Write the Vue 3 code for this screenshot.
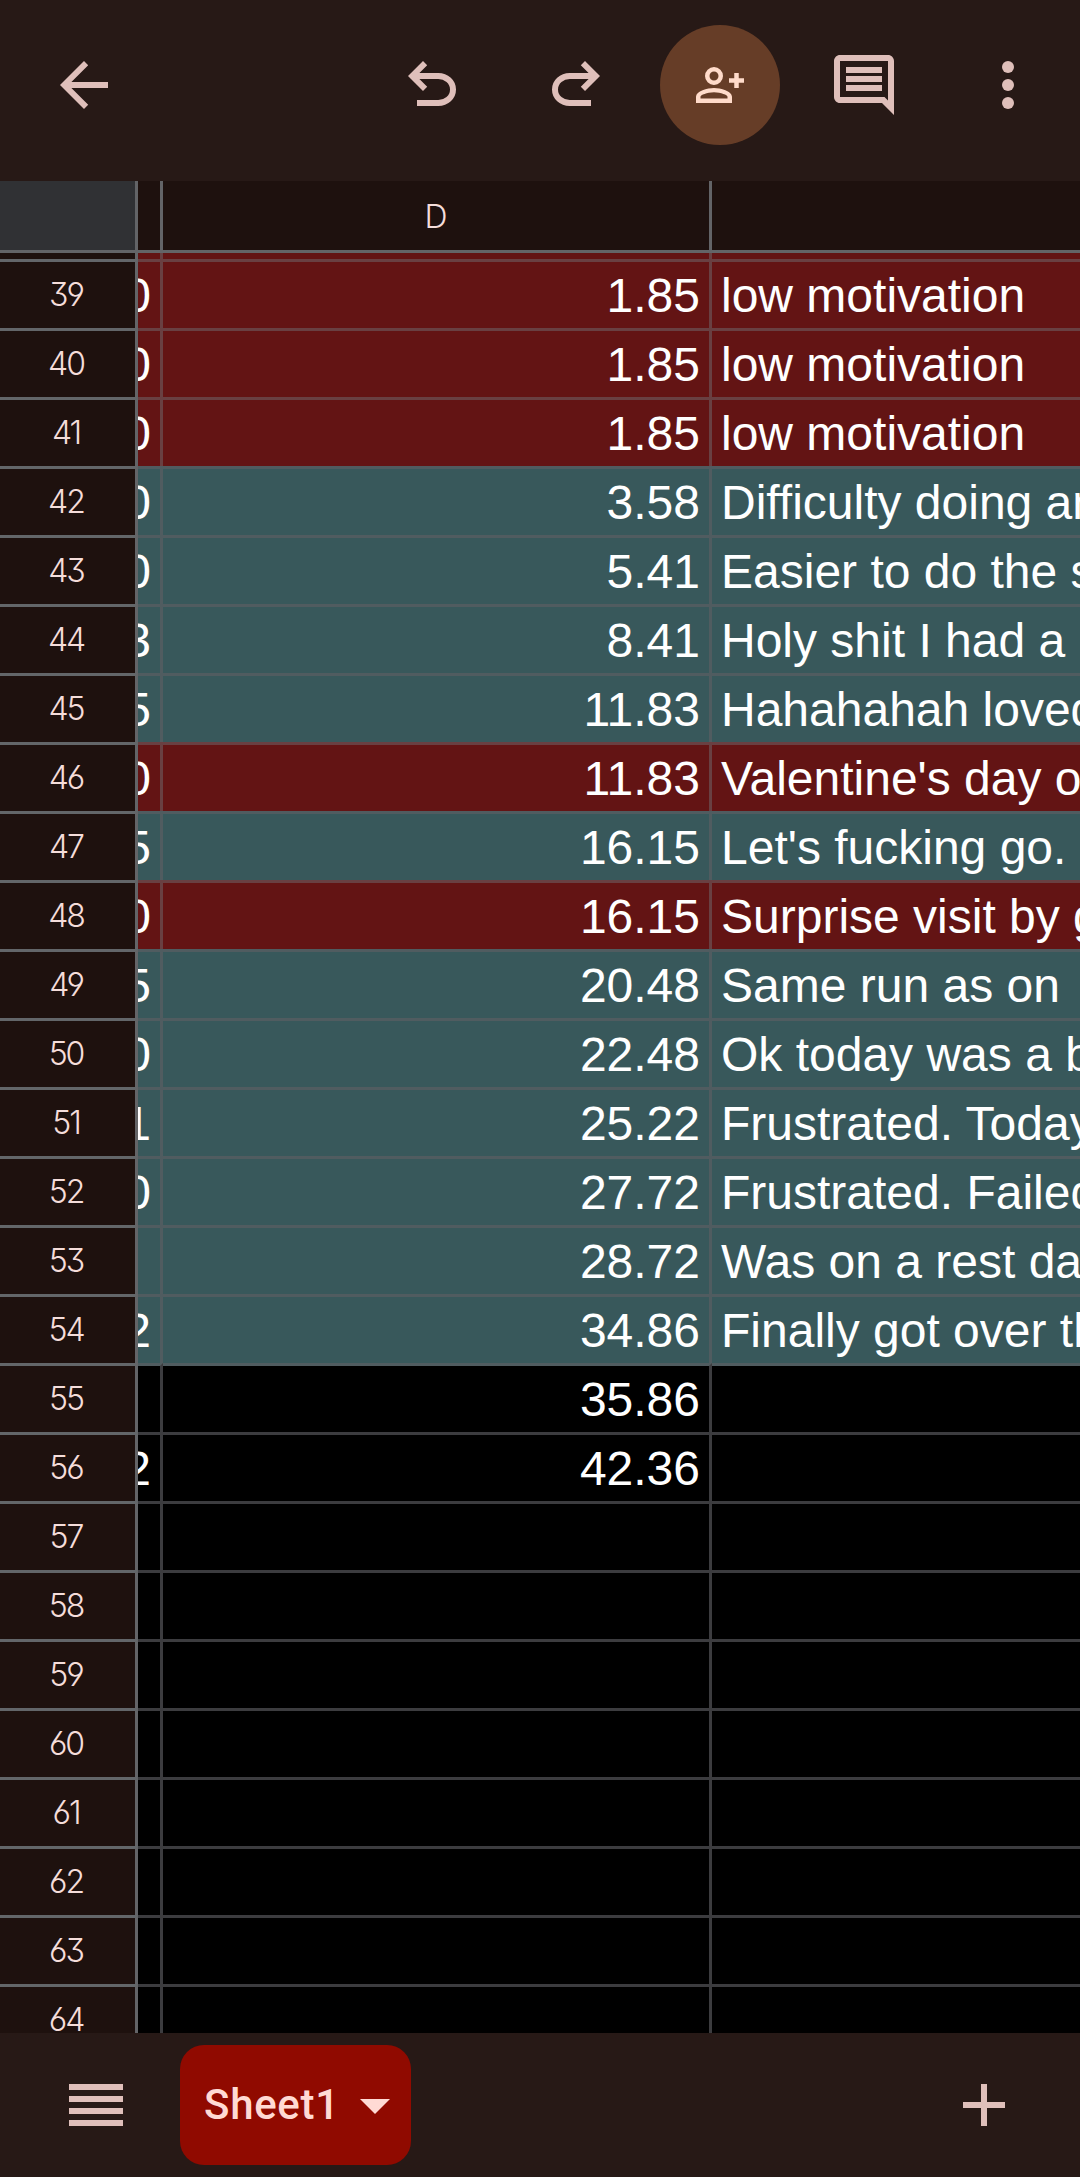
<template>
  <div class="app">
    <!-- toolbar -->
    <header class="toolbar">
      <button class="tool" aria-label="Back">
        <svg viewBox="0 0 24 24"><path d="M20 11H7.8l5.6-5.6L12 4l-8 8 8 8 1.4-1.4L7.8 13H20v-2z" /></svg>
      </button>
      <div class="actions">
        <button class="tool" aria-label="Undo">
          <svg viewBox="0 0 24 24"><path :d="undoPath" /></svg>
        </button>
        <button class="tool" aria-label="Redo">
          <svg class="flip" viewBox="0 0 24 24"><path :d="undoPath" /></svg>
        </button>
        <button class="tool share" aria-label="Share">
          <svg viewBox="0 0 54 54">
            <circle cx="21" cy="18" r="6.75" fill="none" stroke="currentColor" stroke-width="4.5" />
            <path fill-rule="evenodd" d="M3 45v-6.3C3 33 14.5 30 21 30s18 3 18 8.7V45zM7.5 40.5h27v-1.8c0-1.600-6.5-4.5-13.5-4.5s-13.5 2.900-13.5 4.500z" />
            <path d="M41.25 15h4.500v5.250H51v4.500h-5.250V30h-4.500v-5.250H36v-4.500h5.250z" />
          </svg>
        </button>
        <button class="tool" aria-label="Comments">
          <svg viewBox="0 0 24 24"><path d="M22 4c0-1.100-.9-2-2-2H4c-1.100 0-2 .9-2 2v12c0 1.100.9 2 2 2h14l4 4V4zM20 4v13.170L18.830 16H4V4h16zM6 12h12v2H6zM6 9h12v2H6zM6 6h12v2H6z" /></svg>
        </button>
        <button class="tool" aria-label="More">
          <svg viewBox="0 0 24 24">
            <circle cx="12" cy="6" r="2" /><circle cx="12" cy="12" r="2" /><circle cx="12" cy="18" r="2" />
          </svg>
        </button>
      </div>
    </header>

    <!-- grid -->
    <main class="sheet">
      <div class="row head">
        <div class="corner"></div>
        <div class="col"></div>
        <div class="col">D</div>
        <div class="col last"></div>
      </div>
      <div class="row red peek">
        <div class="num"></div>
        <div class="cell"></div>
        <div class="cell"></div>
        <div class="cell last"></div>
      </div>
      <div v-for="row in rows" :key="row.n" class="row" :class="row.tone">
        <div class="num">{{ row.n }}</div>
        <div class="cell right">{{ row.c }}</div>
        <div class="cell right">{{ row.d }}</div>
        <div class="cell last">{{ row.e }}</div>
      </div>
    </main>

    <!-- sheet tabs -->
    <footer class="tabs">
      <button class="all-sheets" aria-label="All sheets">
        <span></span><span></span><span></span><span></span>
      </button>
      <button class="tab">
        <span class="tab-name">Sheet1</span>
        <svg class="caret" viewBox="0 0 30 15"><path d="M0 0h30L15 15z" /></svg>
      </button>
      <button class="add" aria-label="Add sheet">
        <svg viewBox="0 0 42 42"><path d="M18 0h6v18h18v6H24v18h-6V24H0v-6h18z" /></svg>
      </button>
    </footer>
  </div>
</template>

<script setup>
const undoPath = 'M7 19v-2h7.1q1.575 0 2.738-1T18 13.5 16.838 11 14.1 10H7.8l2.6 2.6L9 14 4 9l5-5 1.4 1.4L7.8 8h6.3q2.425 0 4.163 1.575T20 13.5t-1.737 3.925T14.1 19z'

const filled = [
  { n: 39, tone: 'red', c: '0', d: '1.85', e: 'low motivation' },
  { n: 40, tone: 'red', c: '0', d: '1.85', e: 'low motivation' },
  { n: 41, tone: 'red', c: '0', d: '1.85', e: 'low motivation' },
  { n: 42, tone: 'teal', c: '0', d: '3.58', e: 'Difficulty doing an' },
  { n: 43, tone: 'teal', c: '0', d: '5.41', e: 'Easier to do the s' },
  { n: 44, tone: 'teal', c: '3', d: '8.41', e: 'Holy shit I had a' },
  { n: 45, tone: 'teal', c: '5', d: '11.83', e: 'Hahahahah loved' },
  { n: 46, tone: 'red', c: '0', d: '11.83', e: "Valentine's day o" },
  { n: 47, tone: 'teal', c: '5', d: '16.15', e: "Let's fucking go." },
  { n: 48, tone: 'red', c: '0', d: '16.15', e: 'Surprise visit by g' },
  { n: 49, tone: 'teal', c: '5', d: '20.48', e: 'Same run as on' },
  { n: 50, tone: 'teal', c: '0', d: '22.48', e: 'Ok today was a b' },
  { n: 51, tone: 'teal', c: '1', d: '25.22', e: 'Frustrated. Today' },
  { n: 52, tone: 'teal', c: '0', d: '27.72', e: 'Frustrated. Failed' },
  { n: 53, tone: 'teal', c: '', d: '28.72', e: 'Was on a rest da' },
  { n: 54, tone: 'teal', c: '2', d: '34.86', e: 'Finally got over th' },
  { n: 55, tone: 'after-fill', c: '', d: '35.86', e: '' },
  { n: 56, tone: '', c: '2', d: '42.36', e: '' }
]

// empty rows down to the bottom of the viewport
const blank = Array.from({ length: 8 }, (_, i) => ({ n: 57 + i, tone: '', c: '', d: '', e: '' }))

const rows = [...filled, ...blank]
</script>

<style>
body { margin: 0; background: #271916; }
</style>

<style scoped>
.app { width: 1080px; height: 2177px; display: flex; flex-direction: column; overflow: hidden; background: #271916; }
button { border: none; background: none; padding: 0; margin: 0; color: inherit; font: inherit; cursor: pointer; }
svg { display: block; fill: currentColor; }

.toolbar { flex: none; height: 169px; padding: 0 0 12px 12px; box-sizing: border-box; margin-bottom: 12px; display: flex; justify-content: space-between; align-items: flex-end; color: #dfbfba; }
.tool { width: 144px; height: 144px; display: flex; align-items: center; justify-content: center; }
.tool svg { width: 72px; height: 72px; }
.tool .flip { transform: scaleX(-1); }
.actions { display: flex; }
.tool.share { width: 120px; height: 120px; margin: 12px; border-radius: 50%; background: #663d27; color: #ffdbca; }
.tool.share svg { width: 54px; height: 54px; }

.sheet { flex: 1; min-height: 0; overflow: hidden; background: #000; }
.row { --line: #3c3c3f; --fill: #000; display: grid; grid-template-columns: 138px 25px 549px 368px; height: 69px; }
.row.red { --line: #694042; --fill: #631414; }
.row.teal { --line: #505c60; --fill: #38585b; }
.num, .corner, .col, .cell { box-sizing: border-box; overflow: hidden; white-space: nowrap; }
.num, .corner, .col { border-right: 3px solid #636467; font-family: Inter, sans-serif; font-weight: 350; color: #f5ddda; text-align: center; }
.num { border-top: 3px solid #636669; padding-right: 3px; background: #1e110e; font-size: 32px; line-height: 66px; letter-spacing: -2px; font-feature-settings: "cv03", "cv04", "cv09"; }
.cell { border-top: 3px solid var(--line); border-right: 3px solid var(--line); background: var(--fill); padding: 0 9px; font-family: "Liberation Sans", Arial, sans-serif; font-size: 48px; line-height: 68px; color: #fff; }
.cell.right { display: flex; justify-content: flex-end; }
.row .last { border-right: none; }
.row.after-fill .cell { border-top-color: #505c60; }

.row.head { height: 72px; }
.head .corner, .head .col { border-bottom: 3px solid #636467; background: #1e110e; font-size: 32px; line-height: 71px; }
.head .corner { background: #303134; }
.row.peek { height: 6px; }
.peek .num, .peek .cell { border-top: none; }

.tabs { flex: none; height: 144px; display: flex; align-items: center; padding: 0 75px 0 69px; box-sizing: border-box; color: #dfbfba; }
.all-sheets { width: 54px; display: flex; flex-direction: column; gap: 6px; }
.all-sheets span { height: 6px; background: currentColor; }
.tab { width: 231px; height: 120px; margin-left: 57px; padding: 0 21px 0 24px; box-sizing: border-box; display: flex; align-items: center; justify-content: space-between; border-radius: 24px; background: #900a00; color: #ffdad4; }
.tab-name { font-family: Roboto, sans-serif; font-size: 42px; font-weight: 500; line-height: 60px; letter-spacing: 0.7px; }
.caret { width: 30px; height: 15px; margin-top: 3px; }
.add { width: 42px; height: 42px; margin-left: auto; }
</style>
